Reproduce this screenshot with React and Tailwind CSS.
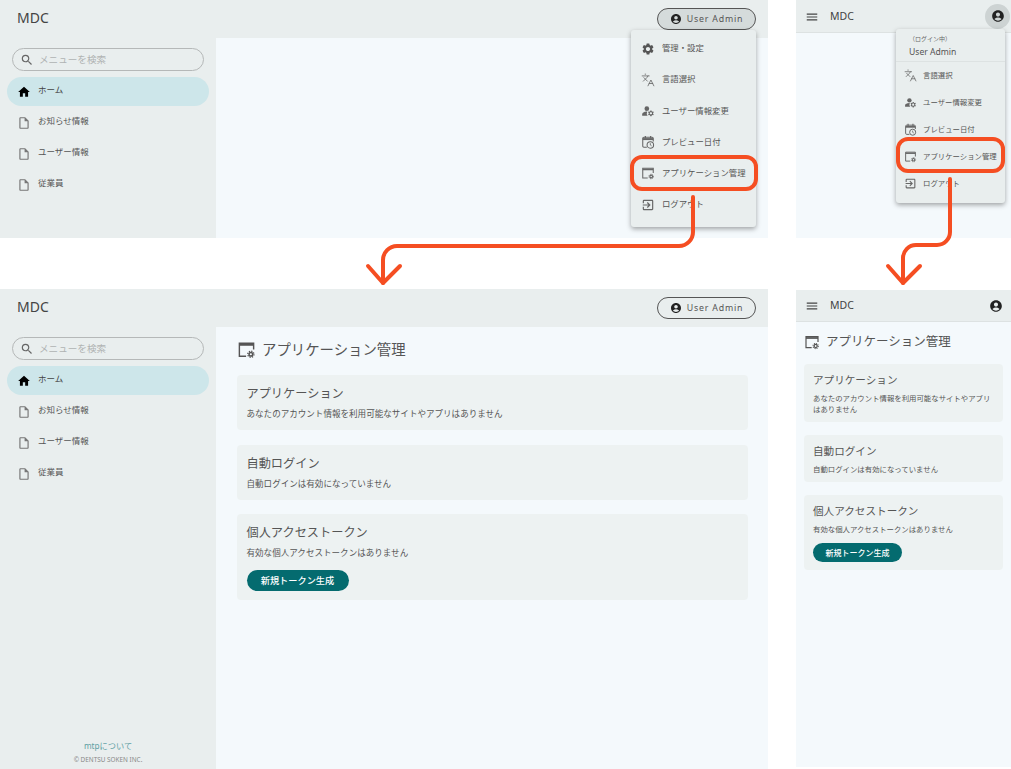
import { MdHome, MdSearch, MdAccountCircle, MdMenu, MdOutlineInsertDriveFile, MdSettings, MdManageAccounts, MdOutlineExitToApp } from "react-icons/md";
import { Languages } from "lucide-react";

const jp = "font-['Noto_Sans','Noto_Sans_CJK_JP',sans-serif]";

const AppIcon = ({ className }) => (
  <svg viewBox="0 0 24 24" className={className} fill="none" stroke="currentColor" strokeWidth="1.8">
    <path d="M11.5 20.5H3V4h18v8" />
    <path d="M3 6h18" strokeWidth="2.6" />
    <circle cx="17.5" cy="18" r="2.3" strokeWidth="1.9" />
    <circle cx="17.5" cy="18" r="3.9" strokeWidth="1.6" strokeDasharray="1.6 1.46" />
  </svg>
);

const CalendarClockIcon = ({ className }) => (
  <svg viewBox="0 0 24 24" className={className} fill="none" stroke="currentColor" strokeWidth="1.8">
    <path d="M10 21H5a2 2 0 0 1-2-2V6a2 2 0 0 1 2-2h14a2 2 0 0 1 2 2v5" />
    <path d="M3 7h18" strokeWidth="3.4" />
    <path d="M7.5 1.5v4M16.5 1.5v4" strokeWidth="2" />
    <circle cx="16" cy="17" r="5.6" />
    <path d="M16 14v3.2l2.2 1.4" strokeWidth="1.4" />
  </svg>
);

const navItems = ["お知らせ情報", "ユーザー情報", "従業員"];

const Sidebar = ({ footer }) => (
  <aside className="w-[216px] shrink-0 bg-[#e9eeee] flex flex-col">
    <div className="px-[12px] pt-[10px]">
      <div className="h-[23px] rounded-full border border-[#b5b8b8] flex items-center pl-[7px] gap-[5px] text-[9.6px] text-[#b0b3b3]">
        <MdSearch className="text-[#666] w-[14px] h-[14px]" />
        <span className="pt-[1px]">メニューを検索</span>
      </div>
    </div>
    <nav className="px-[7px] pt-[6px] flex flex-col gap-[2px]">
      <div className="h-[29px] rounded-full bg-[#cde6ea] flex items-center pl-[10px] gap-[7px] text-[8.5px] text-[#444]">
        <MdHome className="w-[14px] h-[14px] text-black" />
        <span className="pb-[2px]">ホーム</span>
      </div>
      {navItems.map((n) => (
        <div key={n} className="h-[29px] flex items-center pl-[10px] gap-[7px] text-[8.5px] text-[#555]">
          <MdOutlineInsertDriveFile className="w-[14px] h-[14px] text-[#777]" />
          <span className="pb-[2px]">{n}</span>
        </div>
      ))}
    </nav>
    {footer && (
      <div className="mt-auto pb-[3px] text-center">
        <div className="text-[8.2px] leading-[13px] mb-[2px] text-[#5e9ea3]">mtpについて</div>
        <div className="text-[6.4px] leading-[12px] text-[#888]">© DENTSU SOKEN INC.</div>
      </div>
    )}
  </aside>
);

const Card = ({ title, text, small, button }) => (
  <section className={small ? "bg-[#edf2f2] rounded-[4px] px-[9px] pt-[8px] pb-[6.5px]" : "bg-[#edf2f2] rounded-[4px] px-[9.5px] pt-[10px] pb-[9px]"}>
    <h3 className={small ? "text-[10.6px] leading-[16px] text-[#555]" : "text-[12.2px] leading-[18px] text-[#555]"}>{title}</h3>
    <p className={small ? "text-[7.4px] leading-[11.5px] mt-[5px] text-[#555]" : "text-[8.55px] leading-[13px] mt-[5px] text-[#555]"}>{text}</p>
    {button && (
      <button className={small ? "block mt-[7.5px] mb-[1.5px] w-[89px] h-[19px] rounded-full bg-[#046b6f] text-white text-[8px] font-medium" : "block mt-[10px] w-[102px] h-[21px] rounded-full bg-[#046b6f] text-white text-[9.2px] font-medium"}>
        新規トークン生成
      </button>
    )}
  </section>
);

const UserButton = ({ active }) => (
  <button className={(active ? "bg-[#d5dbdb] " : "") + "w-[99px] h-[22px] rounded-full border border-[#555] flex items-center justify-center gap-[5px] text-[8.8px] tracking-[0.8px] text-[#555]"}>
    <MdAccountCircle className="w-[12px] h-[12px] text-[#222]" />
    <span className="pt-[1px]">User Admin</span>
  </button>
);

const menuIcons = {
  settings: <MdSettings className="w-full h-full text-[#555]" />,
  lang: <Languages className="w-full h-full" strokeWidth={1.4} />,
  user: <MdManageAccounts className="w-full h-full" />,
  preview: <CalendarClockIcon className="w-full h-full" />,
  app: <AppIcon className="w-full h-full" />,
  logout: <MdOutlineExitToApp className="w-full h-full" />,
};

const MenuRow = ({ icon, label, small }) => (
  <div className={small ? "h-[27px] flex items-center pl-[8px] gap-[6px] text-[7.4px] text-[#555]" : "h-[31.2px] flex items-center pl-[10px] gap-[7px] text-[8.4px] text-[#555]"}>
    <span className={small ? "w-[13px] h-[13px] text-[#666] shrink-0" : "w-[14px] h-[14px] text-[#666] shrink-0"}>{menuIcons[icon]}</span>
    {label}
  </div>
);

const Title = ({ small }) => (
  <div className={small ? "flex items-center gap-[6px] text-[12.5px] text-[#555]" : "flex items-center gap-[6px] text-[14.4px] text-[#555]"}>
    <AppIcon className={small ? "w-[16px] h-[16px] text-[#555]" : "w-[19px] h-[19px] text-[#555]"} />
    アプリケーション管理
  </div>
);

export default function App() {
  return (
    <div className={"relative w-[1011px] h-[769px] bg-white overflow-hidden " + jp}>
      {/* top left window */}
      <div className="absolute left-0 top-0 w-[768px] h-[238px] overflow-hidden flex flex-col bg-[#f4f9fc]">
        <header className="h-[38px] shrink-0 bg-[#e9eeee] flex items-center justify-between pl-[17px] pr-[12px]">
          <span className="text-[14px] text-[#444] pb-[4px]">MDC</span>
          <UserButton active />
        </header>
        <div className="flex flex-1">
          <Sidebar />
        </div>
        <div className="absolute left-[631px] top-[30px] w-[125px] h-[197px] pt-[3px] bg-[#e9eeee] rounded-[3px] shadow-[0_2px_5px_rgba(0,0,0,0.35)]">
          <MenuRow icon="settings" label="管理・設定" />
          <MenuRow icon="lang" label="言語選択" />
          <MenuRow icon="user" label="ユーザー情報変更" />
          <MenuRow icon="preview" label="プレビュー日付" />
          <MenuRow icon="app" label="アプリケーション管理" />
          <MenuRow icon="logout" label="ログアウト" />
        </div>
      </div>

      {/* bottom left window */}
      <div className="absolute left-0 top-[289px] w-[768px] h-[480px] flex flex-col bg-[#f4f9fc]">
        <header className="h-[38px] shrink-0 bg-[#e9eeee] flex items-center justify-between pl-[17px] pr-[12px]">
          <span className="text-[14px] text-[#444] pb-[4px]">MDC</span>
          <UserButton />
        </header>
        <div className="flex flex-1">
          <Sidebar footer />
          <main className="flex-1 pl-[21px] pr-[20px] pt-[12px]">
            <Title />
            <div className="mt-[14.4px] flex flex-col gap-[14.5px]">
              <Card title="アプリケーション" text="あなたのアカウント情報を利用可能なサイトやアプリはありません" />
              <Card title="自動ログイン" text="自動ログインは有効になっていません" />
              <Card title="個人アクセストークン" text="有効な個人アクセストークンはありません" button />
            </div>
          </main>
        </div>
      </div>

      {/* top right window */}
      <div className="absolute left-[796px] top-0 w-[215px] h-[238px] overflow-hidden bg-[#f4f9fc]">
        <header className="h-[33px] bg-[#e9eeee] border-b border-[#dde2e2] flex items-center pl-[9px] pr-[1px]">
          <MdMenu className="w-[14px] h-[14px] text-[#444] mt-[1px]" />
          <span className="ml-[11px] text-[10.5px] text-[#444] mt-[1px]">MDC</span>
          <span className="ml-auto w-[25px] h-[25px] rounded-full bg-[#cdd3d3] flex items-center justify-center">
            <MdAccountCircle className="w-[14px] h-[14px] text-[#222]" />
          </span>
        </header>
        <div className="absolute left-[100px] top-[29px] w-[109px] h-[174px] bg-[#e9eeee] rounded-[3px] shadow-[0_2px_5px_rgba(0,0,0,0.35)]">
          <div className="h-[33px] border-b border-[#dde2e2] pl-[13px] pt-[6px]">
            <div className="text-[6px] leading-[9px] text-[#666]">（ログイン中）</div>
            <div className="text-[8.6px] leading-[14px] mt-[1px] text-[#555]">User Admin</div>
          </div>
          <MenuRow small icon="lang" label="言語選択" />
          <MenuRow small icon="user" label="ユーザー情報変更" />
          <MenuRow small icon="preview" label="プレビュー日付" />
          <MenuRow small icon="app" label="アプリケーション管理" />
          <MenuRow small icon="logout" label="ログアウト" />
        </div>
      </div>

      {/* bottom right window */}
      <div className="absolute left-[796px] top-[290px] w-[215px] h-[477px] bg-[#f4f9fc]">
        <header className="h-[32px] bg-[#e9eeee] border-b border-[#dde2e2] flex items-center pl-[9px] pr-[8px]">
          <MdMenu className="w-[14px] h-[14px] text-[#444]" />
          <span className="ml-[11px] text-[10.5px] text-[#444]">MDC</span>
          <MdAccountCircle className="ml-auto w-[14px] h-[14px] text-[#222]" />
        </header>
        <div className="px-[8px] pt-[11px]">
          <Title small />
          <div className="mt-[12px] flex flex-col gap-[13px]">
            <Card small title="アプリケーション" text="あなたのアカウント情報を利用可能なサイトやアプリはありません" />
            <Card small title="自動ログイン" text="自動ログインは有効になっていません" />
            <Card small title="個人アクセストークン" text="有効な個人アクセストークンはありません" button />
          </div>
        </div>
      </div>

      {/* orange annotations */}
      <svg className="absolute left-0 top-0 w-[1011px] h-[769px] pointer-events-none" viewBox="0 0 1011 769" fill="none" stroke="#f54e22" strokeWidth="4" strokeLinecap="round" strokeLinejoin="round">
        <rect x="632" y="157" width="124" height="32" rx="10" />
        <rect x="898" y="139" width="105" height="32" rx="10" />
        <path d="M693 197V232a14 14 0 0 1-14 14H397a14 14 0 0 0-14 14V283" />
        <path d="M368 266L383 283L400 266" />
        <path d="M950 179V232a13 13 0 0 1-13 13H916a13 13 0 0 0-13 13V283" />
        <path d="M888 266L903 283L920 266" />
      </svg>
    </div>
  );
}
